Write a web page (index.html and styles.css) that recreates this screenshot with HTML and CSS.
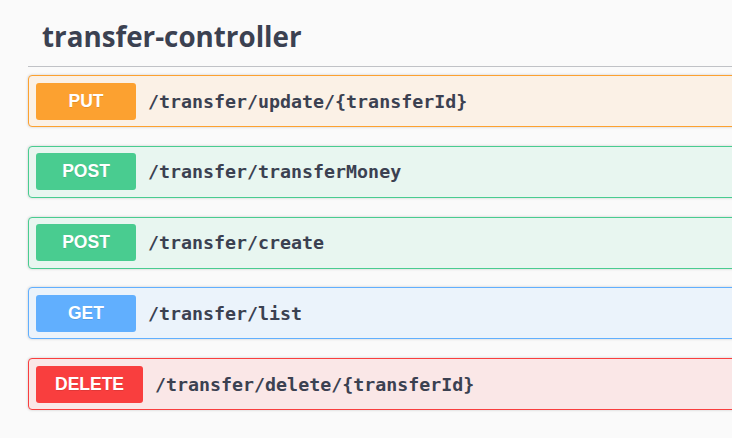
FILE: index.html
```html
<!DOCTYPE html>
<html>
<head>
<meta charset="utf-8">
<link rel="stylesheet" href="styles.css">
</head>
<body>
<div class="tag-section">
  <h4 class="tag-title">transfer-controller</h4>
  <div class="ops">
    <div class="op op-put"><span class="method">PUT</span><span class="path">/transfer/update/{transferId}</span></div>
    <div class="op op-post"><span class="method">POST</span><span class="path">/transfer/transferMoney</span></div>
    <div class="op op-post"><span class="method">POST</span><span class="path">/transfer/create</span></div>
    <div class="op op-get"><span class="method">GET</span><span class="path">/transfer/list</span></div>
    <div class="op op-delete"><span class="method">DELETE</span><span class="path">/transfer/delete/{transferId}</span></div>
  </div>
</div>
</body>
</html>
```
FILE: styles.css
```css
html, body {
  margin: 0;
  padding: 0;
  background: #fafafa;
  overflow: hidden;
}
body {
  width: 732px;
  height: 438px;
}
.tag-section {
  margin-left: 28px;
  width: 740px;
}
.tag-title {
  margin: 0;
  height: 67px;
  box-sizing: border-box;
  padding: 17px 0 0 14px;
  font-family: "Open Sans", sans-serif;
  font-weight: 700;
  font-size: 27.75px;
  line-height: 38px;
  color: #3b4151;
  border-bottom: 1px solid rgba(59, 65, 81, 0.3);
}
.ops {
  display: flex;
  flex-direction: column;
  gap: 18.75px;
  padding-top: 8px;
}
.op {
  height: 52px;
  box-sizing: border-box;
  border: 1px solid;
  border-radius: 4px;
  box-shadow: 0 0 3px rgba(0, 0, 0, 0.19);
  display: flex;
  align-items: center;
  padding: 0 7px;
}
.method {
  min-width: 100px;
  height: 37px;
  box-sizing: border-box;
  padding: 0 19px;
  border-radius: 3px;
  display: flex;
  align-items: center;
  justify-content: center;
  color: #fff;
  font-family: "Liberation Sans", Arial, sans-serif;
  font-weight: 700;
  font-size: 17.5px;
  text-shadow: 0 1px 0 rgba(0, 0, 0, 0.1);
}
.path {
  margin-left: 12px;
  font-family: "DejaVu Sans Mono", monospace;
  font-weight: 700;
  font-size: 18.3px;
  color: #3b4151;
}
.op-put { border-color: #fca130; background: #fbf1e6; }
.op-put .method { background: #fca130; }
.op-post { border-color: #49cc90; background: #e8f6f0; }
.op-post .method { background: #49cc90; }
.op-get { border-color: #61affe; background: #ebf3fb; }
.op-get .method { background: #61affe; }
.op-delete { border-color: #f93e3e; background: #fae7e7; }
.op-delete .method { background: #f93e3e; }
```
